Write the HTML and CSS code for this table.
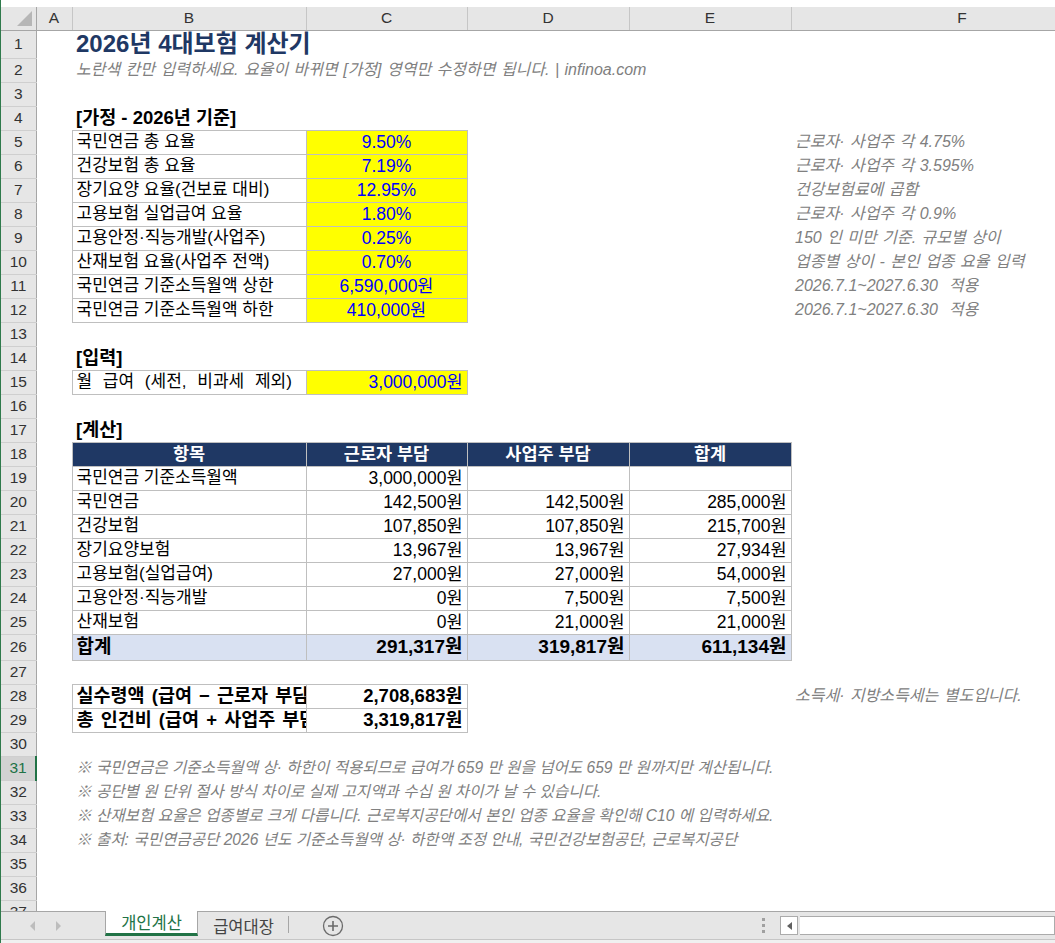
FILE: index.html
```html
<!DOCTYPE html>
<html lang="ko">
<head>
<meta charset="utf-8">
<title>2026년 4대보험 계산기</title>
<link rel="stylesheet" href="styles.css">
</head>
<body>
<div class="app">
  <div class="topgap"></div>
  <div class="gridwrap">
    <table class="sheet">
      <colgroup>
        <col class="c-rh"><col class="c-a"><col class="c-b"><col class="c-c"><col class="c-d"><col class="c-e"><col class="c-f">
      </colgroup>
      <tr class="hdr">
        <td class="corner"><span class="tri"></span></td>
        <td class="ch">A</td><td class="ch">B</td><td class="ch">C</td><td class="ch">D</td><td class="ch">E</td><td class="ch">F</td>
      </tr>
      <tr class="r1"><td class="rh">1</td><td></td><td class="title">2026년 4대보험 계산기</td><td></td><td></td><td></td><td></td></tr>
      <tr><td class="rh">2</td><td></td><td class="sub">노란색 칸만 입력하세요. 요율이 바뀌면 [가정] 영역만 수정하면 됩니다. | infinoa.com</td><td></td><td></td><td></td><td></td></tr>
      <tr><td class="rh">3</td><td></td><td></td><td></td><td></td><td></td><td></td></tr>
      <tr><td class="rh">4</td><td></td><td class="sec">[가정 - 2026년 기준]</td><td></td><td></td><td></td><td></td></tr>
      <tr><td class="rh">5</td><td></td><td class="bx">국민연금 총 요율</td><td class="bx inp ctr">9.50%</td><td></td><td></td><td class="note">근로자· 사업주 각 4.75%</td></tr>
      <tr><td class="rh">6</td><td></td><td class="bx">건강보험 총 요율</td><td class="bx inp ctr">7.19%</td><td></td><td></td><td class="note">근로자· 사업주 각 3.595%</td></tr>
      <tr><td class="rh">7</td><td></td><td class="bx">장기요양 요율(건보료 대비)</td><td class="bx inp ctr">12.95%</td><td></td><td></td><td class="note">건강보험료에 곱함</td></tr>
      <tr><td class="rh">8</td><td></td><td class="bx">고용보험 실업급여 요율</td><td class="bx inp ctr">1.80%</td><td></td><td></td><td class="note">근로자· 사업주 각 0.9%</td></tr>
      <tr><td class="rh">9</td><td></td><td class="bx">고용안정·직능개발(사업주)</td><td class="bx inp ctr">0.25%</td><td></td><td></td><td class="note">150 인 미만 기준. 규모별 상이</td></tr>
      <tr><td class="rh">10</td><td></td><td class="bx">산재보험 요율(사업주 전액)</td><td class="bx inp ctr">0.70%</td><td></td><td></td><td class="note">업종별 상이 - 본인 업종 요율 입력</td></tr>
      <tr><td class="rh">11</td><td></td><td class="bx">국민연금 기준소득월액 상한</td><td class="bx inp ctr">6,590,000원</td><td></td><td></td><td class="note">2026.7.1~2027.6.30&nbsp; 적용</td></tr>
      <tr><td class="rh">12</td><td></td><td class="bx">국민연금 기준소득월액 하한</td><td class="bx inp ctr">410,000원</td><td></td><td></td><td class="note">2026.7.1~2027.6.30&nbsp; 적용</td></tr>
      <tr><td class="rh">13</td><td></td><td></td><td></td><td></td><td></td><td></td></tr>
      <tr><td class="rh">14</td><td></td><td class="sec">[입력]</td><td></td><td></td><td></td><td></td></tr>
      <tr><td class="rh">15</td><td></td><td class="bx wide">월 급여 (세전, 비과세 제외)</td><td class="bx inp num">3,000,000원</td><td></td><td></td><td></td></tr>
      <tr><td class="rh">16</td><td></td><td></td><td></td><td></td><td></td><td></td></tr>
      <tr><td class="rh">17</td><td></td><td class="sec">[계산]</td><td></td><td></td><td></td><td></td></tr>
      <tr><td class="rh">18</td><td></td><td class="bx th">항목</td><td class="bx th">근로자 부담</td><td class="bx th">사업주 부담</td><td class="bx th">합계</td><td></td></tr>
      <tr><td class="rh">19</td><td></td><td class="bx">국민연금 기준소득월액</td><td class="bx num">3,000,000원</td><td class="bx num"></td><td class="bx num"></td><td></td></tr>
      <tr><td class="rh">20</td><td></td><td class="bx">국민연금</td><td class="bx num">142,500원</td><td class="bx num">142,500원</td><td class="bx num">285,000원</td><td></td></tr>
      <tr><td class="rh">21</td><td></td><td class="bx">건강보험</td><td class="bx num">107,850원</td><td class="bx num">107,850원</td><td class="bx num">215,700원</td><td></td></tr>
      <tr><td class="rh">22</td><td></td><td class="bx">장기요양보험</td><td class="bx num">13,967원</td><td class="bx num">13,967원</td><td class="bx num">27,934원</td><td></td></tr>
      <tr><td class="rh">23</td><td></td><td class="bx">고용보험(실업급여)</td><td class="bx num">27,000원</td><td class="bx num">27,000원</td><td class="bx num">54,000원</td><td></td></tr>
      <tr><td class="rh">24</td><td></td><td class="bx">고용안정·직능개발</td><td class="bx num">0원</td><td class="bx num">7,500원</td><td class="bx num">7,500원</td><td></td></tr>
      <tr><td class="rh">25</td><td></td><td class="bx">산재보험</td><td class="bx num">0원</td><td class="bx num">21,000원</td><td class="bx num">21,000원</td><td></td></tr>
      <tr class="r26"><td class="rh">26</td><td></td><td class="bx tot">합계</td><td class="bx tot num">291,317원</td><td class="bx tot num">319,817원</td><td class="bx tot num">611,134원</td><td></td></tr>
      <tr><td class="rh">27</td><td></td><td></td><td></td><td></td><td></td><td></td></tr>
      <tr><td class="rh">28</td><td></td><td class="bx bold clip">실수령액 (급여 − 근로자 부담)</td><td class="bx bold num">2,708,683원</td><td></td><td></td><td class="note">소득세· 지방소득세는 별도입니다.</td></tr>
      <tr><td class="rh">29</td><td></td><td class="bx bold clip">총 인건비 (급여 + 사업주 부담)</td><td class="bx bold num">3,319,817원</td><td></td><td></td><td></td></tr>
      <tr><td class="rh">30</td><td></td><td></td><td></td><td></td><td></td><td></td></tr>
      <tr><td class="rh sel">31</td><td></td><td class="note fn">※ 국민연금은 기준소득월액 상· 하한이 적용되므로 급여가 659 만 원을 넘어도 659 만 원까지만 계산됩니다.</td><td></td><td></td><td></td><td></td></tr>
      <tr><td class="rh">32</td><td></td><td class="note fn">※ 공단별 원 단위 절사 방식 차이로 실제 고지액과 수십 원 차이가 날 수 있습니다.</td><td></td><td></td><td></td><td></td></tr>
      <tr><td class="rh">33</td><td></td><td class="note fn">※ 산재보험 요율은 업종별로 크게 다릅니다. 근로복지공단에서 본인 업종 요율을 확인해 C10 에 입력하세요.</td><td></td><td></td><td></td><td></td></tr>
      <tr><td class="rh">34</td><td></td><td class="note fn">※ 출처: 국민연금공단 2026 년도 기준소득월액 상· 하한액 조정 안내, 국민건강보험공단, 근로복지공단</td><td></td><td></td><td></td><td></td></tr>
      <tr><td class="rh">35</td><td></td><td></td><td></td><td></td><td></td><td></td></tr>
      <tr><td class="rh">36</td><td></td><td></td><td></td><td></td><td></td><td></td></tr>
      <tr><td class="rh">37</td><td></td><td></td><td></td><td></td><td></td><td></td></tr>
    </table>
  </div>
  <div class="tabbar">
    <div class="nav"><span class="arr left"></span><span class="arr right"></span></div>
    <div class="tab active">개인계산</div>
    <div class="tab">급여대장</div>
    <div class="addwrap"><span class="add">
      <svg width="22" height="22" viewBox="0 0 22 22"><circle cx="11" cy="11" r="9.5" fill="none" stroke="#6b6b6b" stroke-width="1.3"/><path d="M11 6v10M6 11h10" stroke="#6b6b6b" stroke-width="1.6"/></svg>
    </span></div>
    <div class="spacer"></div>
    <div class="dots"><i></i><i></i><i></i></div>
    <div class="hscroll">
      <div class="sbtn"><span class="sarr"></span></div>
      <div class="strack"></div>
    </div>
  </div>
  <div class="status"></div>
</div>
</body>
</html>
```

FILE: styles.css
```css
html, body {
  margin: 0;
  padding: 0;
  background: #ffffff;
}
body {
  width: 1055px;
  height: 943px;
  overflow: hidden;
  font-family: "Liberation Sans", "Noto Sans CJK KR", sans-serif;
}
.app {
  width: 1055px;
  height: 943px;
  display: flex;
  flex-direction: column;
  border-left: 1px solid #2f7a4c;
  box-sizing: border-box;
}
.topgap {
  height: 7px;
  flex: none;
  background: #ffffff;
}
.gridwrap {
  height: 904px;
  flex: none;
  overflow: hidden;
}
.sheet {
  table-layout: fixed;
  border-collapse: collapse;
  width: 1132px;
}
.c-rh { width: 35px; }
.c-a { width: 36px; }
.c-b { width: 234px; }
.c-c { width: 161px; }
.c-d { width: 162px; }
.c-e { width: 162px; }
.c-f { width: 342px; }

.sheet tr { height: 24px; }
.sheet tr.hdr { height: 23px; }
.sheet tr.r1 { height: 28px; }
.sheet tr.r26 { height: 26px; }

.sheet td {
  padding: 0 4px;
  white-space: nowrap;
  overflow: visible;
  font-size: 17px;
  line-height: 20px;
  color: #000;
  vertical-align: middle;
}

/* headers */
.sheet td.ch {
  background: #e6e6e6;
  border-right: 1px solid #c6c6c6;
  border-bottom: 1px solid #a6a6a6;
  text-align: center;
  font-size: 15.5px;
  color: #333;
  padding: 0;
}
.sheet td.corner {
  background: #e6e6e6;
  border-right: 1px solid #a6a6a6;
  border-bottom: 1px solid #a6a6a6;
  padding: 0;
  position: relative;
}
.tri {
  position: absolute;
  right: 4px;
  bottom: 4px;
  width: 0;
  height: 0;
  border-left: 15px solid transparent;
  border-bottom: 15px solid #b6b6b6;
}
.sheet td.rh {
  background: #e6e6e6;
  border-right: 1px solid #a6a6a6;
  border-bottom: 1px solid #cfcfcf;
  text-align: center;
  font-size: 15.5px;
  color: #333;
  padding: 0;
}
.sheet td.rh.sel {
  background: #d2d2d2;
  color: #217346;
  border-right: 2px solid #217346;
}

/* content */
.sheet td.title {
  font-size: 24px;
  font-weight: bold;
  color: #1f3864;
  line-height: 26px;
}
.sheet td.sub,
.sheet td.note {
  font-style: italic;
  color: #808080;
  font-size: 16px;
  word-spacing: 1px;
}
.sheet td.sub {
  font-size: 16px;
}
.sheet td.fn {
  font-size: 15.6px;
  word-spacing: 0;
}
.sheet td.sec {
  font-weight: bold;
  font-size: 18.5px;
}
.sheet td.bx {
  border: 1px solid #bfbfbf;
}
.sheet td.wide { word-spacing: 6px; }
.sheet td.inp {
  background: #ffff00;
  color: #0000ff;
}
.sheet td.ctr { text-align: center; font-size: 17.5px; }
.sheet td.num { text-align: right; font-size: 17.5px; }
.sheet td.th {
  background: #1f3864;
  color: #ffffff;
  font-weight: bold;
  text-align: center;
  font-size: 17.5px;
  border-color: #bfbfbf;
}
.sheet td.tot {
  background: #d9e1f2;
  font-weight: bold;
  font-size: 19px;
}
.sheet td.bold { font-weight: bold; font-size: 18.5px; }
.sheet td.clip { overflow: hidden; text-overflow: clip; word-spacing: 2px; }

/* sheet tabs */
.tabbar {
  height: 29px;
  flex: none;
  box-sizing: border-box;
  border-top: 1px solid #a6a6a6;
  border-bottom: 1px solid #c6c6c6;
  background: #e6e6e6;
  display: flex;
  align-items: stretch;
}
.nav {
  width: 104px;
  flex: none;
  display: flex;
  align-items: center;
  gap: 21px;
  padding-left: 29px;
  box-sizing: border-box;
}
.arr {
  width: 0;
  height: 0;
  border-top: 5px solid transparent;
  border-bottom: 5px solid transparent;
}
.arr.left { border-right: 5px solid #bdbdbd; }
.arr.right { border-left: 5px solid #bdbdbd; }
.tab {
  width: 91px;
  flex: none;
  display: flex;
  align-items: center;
  justify-content: center;
  font-family: "Noto Sans CJK KR", sans-serif;
  font-size: 16.5px;
  color: #444;
  box-sizing: border-box;
  position: relative;
}
.tab::after {
  content: "";
  position: absolute;
  right: 0;
  top: 4px;
  bottom: 6px;
  width: 1px;
  background: #a6a6a6;
}
.tab.active {
  width: 93px;
  background: #ffffff;
  color: #217346;
  border-left: 1px solid #a6a6a6;
  border-right: 1px solid #a6a6a6;
  border-bottom: 3px solid #217346;
  margin-top: -1px;
  margin-bottom: 3px;
}
.tab.active::after { display: none; }
.addwrap {
  width: 66px;
  flex: none;
  display: flex;
  align-items: center;
  padding-left: 33px;
  box-sizing: border-box;
}
.add { display: flex; }
.spacer { flex: 1; }
.dots {
  width: 26px;
  flex: none;
  display: flex;
  flex-direction: column;
  justify-content: center;
  gap: 3px;
  padding-left: 8px;
  box-sizing: border-box;
}
.dots i {
  display: block;
  width: 3px;
  height: 3px;
  background: #a0a0a0;
}
.hscroll {
  width: 275px;
  flex: none;
  display: flex;
  align-items: center;
}
.sbtn {
  width: 18px;
  height: 19px;
  box-sizing: border-box;
  border: 1px solid #ababab;
  background: #ffffff;
  display: flex;
  align-items: center;
  justify-content: center;
}
.sarr {
  width: 0;
  height: 0;
  border-top: 4px solid transparent;
  border-bottom: 4px solid transparent;
  border-right: 5px solid #606060;
}
.strack {
  flex: 1;
  height: 19px;
  box-sizing: border-box;
  border: 1px solid #ababab;
  border-left: none;
  background: #ffffff;
  margin-left: 2px;
}
.status {
  flex: 1;
  background: #f0f0f0;
}
```
